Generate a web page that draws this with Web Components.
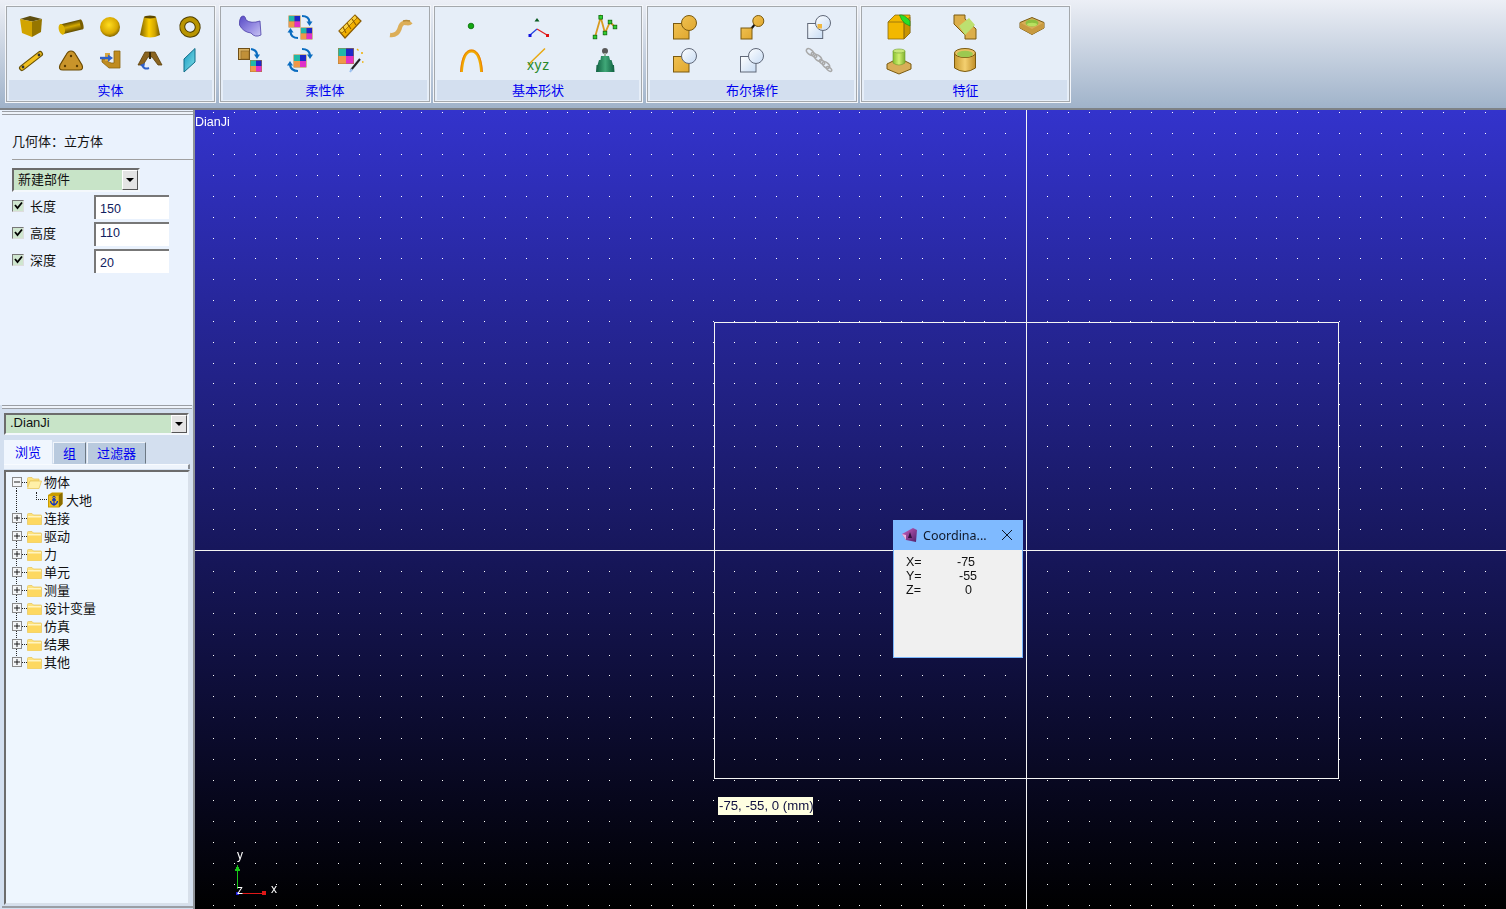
<!DOCTYPE html>
<html lang="zh"><head><meta charset="utf-8"><title>CAD</title>
<style>
html,body{margin:0;padding:0;height:909px;overflow:hidden;background:#000}
body{font-family:"Liberation Sans","Noto Sans CJK SC",sans-serif;font-size:13px}
</style></head><body>
<cad-app>
  <cad-ribbon slot="ribbon">
    <ribbon-group label="实体" cols="5" style="width:209px;margin-right:5px;--px:4px">
      <cad-icon name="box"></cad-icon><cad-icon name="cyl"></cad-icon><cad-icon name="sphere"></cad-icon><cad-icon name="cone"></cad-icon><cad-icon name="torus"></cad-icon>
      <cad-icon name="link"></cad-icon><cad-icon name="plate"></cad-icon><cad-icon name="ubar"></cad-icon><cad-icon name="arch"></cad-icon><cad-icon name="plane"></cad-icon>
    </ribbon-group>
    <ribbon-group label="柔性体" cols="4" style="width:210px;margin-right:4px;--px:4px">
      <cad-icon name="surface"></cad-icon><cad-icon name="swap"></cad-icon><cad-icon name="bar"></cad-icon><cad-icon name="squiggle"></cad-icon>
      <cad-icon name="tocolor"></cad-icon><cad-icon name="rotcolor"></cad-icon><cad-icon name="wand"></cad-icon>
    </ribbon-group>
    <ribbon-group label="基本形状" cols="3" style="width:208px;margin-right:5px;--px:2.5px">
      <cad-icon name="point"></cad-icon><cad-icon name="axes"></cad-icon><cad-icon name="poly"></cad-icon>
      <cad-icon name="arc"></cad-icon><cad-icon name="xyz"></cad-icon><cad-icon name="stack"></cad-icon>
    </ribbon-group>
    <ribbon-group label="布尔操作" cols="3" style="width:210px;margin-right:4px;--px:4px">
      <cad-icon name="b1"></cad-icon><cad-icon name="b2"></cad-icon><cad-icon name="b3"></cad-icon>
      <cad-icon name="b4"></cad-icon><cad-icon name="b5"></cad-icon><cad-icon name="chain"></cad-icon>
    </ribbon-group>
    <ribbon-group label="特征" cols="3" style="width:209px;--px:4px">
      <cad-icon name="f1"></cad-icon><cad-icon name="f2"></cad-icon><cad-icon name="f3"></cad-icon>
      <cad-icon name="f4"></cad-icon><cad-icon name="f5"></cad-icon>
    </ribbon-group>
  </cad-ribbon>
  <cad-sidebar slot="side">
    <geo-panel slot="top">
      <cad-combo slot="combo" style="margin:8px 53px 0 12px;height:24px">新建部件</cad-combo>
      <cad-field label="长度" value="150" shift="1"></cad-field>
      <cad-field label="高度" value="110" shift="-2"></cad-field>
      <cad-field label="深度" value="20" shift="1"></cad-field>
    </geo-panel>
    <browse-panel slot="bottom">
      <cad-combo slot="combo" style="margin:0 4px 0 4px;height:22px;font-family:'Liberation Sans',sans-serif">.DianJi</cad-combo>
      <tree-row folder="open" state="minus" label="物体" line="half-start"></tree-row>
      <tree-row kind="child" label="大地" line="full"></tree-row>
      <tree-row label="连接" state="plus" line="full"></tree-row>
      <tree-row label="驱动" state="plus" line="full"></tree-row>
      <tree-row label="力" state="plus" line="full"></tree-row>
      <tree-row label="单元" state="plus" line="full"></tree-row>
      <tree-row label="测量" state="plus" line="full"></tree-row>
      <tree-row label="设计变量" state="plus" line="full"></tree-row>
      <tree-row label="仿真" state="plus" line="full"></tree-row>
      <tree-row label="结果" state="plus" line="full"></tree-row>
      <tree-row label="其他" state="plus" line="half-end"></tree-row>
    </browse-panel>
  </cad-sidebar>
  <cad-viewport slot="view">
    <coord-dialog></coord-dialog>
  </cad-viewport>
</cad-app>
<script>
const DEFS=`<defs>
<linearGradient id="gh"><stop offset="0" stop-color="#7a5e00"/><stop offset=".45" stop-color="#ffd000"/><stop offset=".75" stop-color="#d0a400"/><stop offset="1" stop-color="#6e5400"/></linearGradient>
<linearGradient id="gv" x2="0" y2="1"><stop offset="0" stop-color="#5f4b00"/><stop offset=".45" stop-color="#d4a900"/><stop offset="1" stop-color="#5f4b00"/></linearGradient>
<radialGradient id="gs" cx=".45" cy=".4" r=".65"><stop offset="0" stop-color="#ffdd20"/><stop offset=".65" stop-color="#d8a800"/><stop offset="1" stop-color="#6e5600"/></radialGradient>
<linearGradient id="bg" x1="0" y1="0" x2="1" y2="1"><stop offset="0" stop-color="#f0c050"/><stop offset="1" stop-color="#e0a830"/></linearGradient>
<linearGradient id="bw" x1="0" y1="0" x2="1" y2="1"><stop offset="0" stop-color="#fdfeff"/><stop offset="1" stop-color="#c8dcf4"/></linearGradient>
<linearGradient id="pu" x1="0" y1="0" x2="1" y2="1"><stop offset="0" stop-color="#5548c4"/><stop offset=".6" stop-color="#9a90e4"/><stop offset="1" stop-color="#c8c4f2"/></linearGradient>
<linearGradient id="cy" x1="0" y1="0" x2="1" y2="1"><stop offset="0" stop-color="#1898c0"/><stop offset="1" stop-color="#80e0e8"/></linearGradient>
<linearGradient id="ge" x2="1"><stop offset="0" stop-color="#0f5f40"/><stop offset=".5" stop-color="#40a878"/><stop offset="1" stop-color="#0f5f40"/></linearGradient>
<linearGradient id="gt" x2="1"><stop offset="0" stop-color="#c89a30"/><stop offset=".5" stop-color="#f4d070"/><stop offset="1" stop-color="#c08e28"/></linearGradient>
<linearGradient id="lg" x2="1"><stop offset="0" stop-color="#88c030"/><stop offset=".5" stop-color="#d0f070"/><stop offset="1" stop-color="#80b030"/></linearGradient>
</defs>`;
const cc=(x,y,s)=>{const h=s/2;return `<rect x="${x-.5}" y="${y-.5}" width="${s+1}" height="${s+1}" fill="#b08030"/><rect x="${x}" y="${y}" width="${h}" height="${h}" fill="#20b8a8"/><rect x="${x+h}" y="${y}" width="${h}" height="${h}" fill="#1c28c8"/><rect x="${x}" y="${y+h}" width="${h}" height="${h}" fill="#f09848"/><rect x="${x+h}" y="${y+h}" width="${h}" height="${h}" fill="#e030c8"/>`};
const ar=(d,h)=>`<path d="${d}" fill="none" stroke="#0a6cc0" stroke-width="2.2"/><polygon points="${h}" fill="#0a6cc0"/>`;
const BS='stroke="#7a5a10" stroke-width="1"';
const BW='stroke="#606878" stroke-width="1"';
const ICONS={
box:`<polygon points="5,8 15,5 27,8 17,10.500" fill="#5e4e10"/><polygon points="5,8 17,10.500 17,26 7,22" fill="#d2a400"/><polygon points="17,10.500 27,8 26,21 17,26" fill="#967600"/>`,
cyl:`<g transform="rotate(-14 16 16)"><rect x="6" y="11" width="21" height="10" fill="url(#gv)"/><ellipse cx="27" cy="16" rx="1.500" ry="5" fill="#7a5e00"/><ellipse cx="6.500" cy="16" rx="3" ry="5.500" fill="#dcb200"/></g>`,
sphere:`<circle cx="16" cy="16" r="10" fill="url(#gs)"/>`,
cone:`<path d="M10 6 L22 6 Q24 14 26 24 Q16 29 6 24 Q8 14 10 6Z" fill="url(#gh)"/><ellipse cx="16" cy="6" rx="6" ry="1.500" fill="#5c4800"/>`,
torus:`<ellipse cx="16" cy="16" rx="7.800" ry="7.600" transform="rotate(30 16 16)" fill="none" stroke="#4f3f00" stroke-width="6"/><ellipse cx="16" cy="16" rx="7.800" ry="7.600" transform="rotate(30 16 16)" fill="none" stroke="#b89400" stroke-width="4"/>`,
link:`<path d="M7 24 L25 10" stroke="#6b5200" stroke-width="6" stroke-linecap="round"/><path d="M7 24 L25 10" stroke="#f0c020" stroke-width="3.600" stroke-linecap="round"/><circle cx="8" cy="23" r="1.400" fill="#333"/><circle cx="24" cy="11" r="1.400" fill="#333"/>`,
plate:`<path d="M16 7 Q19 7 21 11 L27 21 Q29 26 24 26 L8 26 Q3 26 5 21 L11 11 Q13 7 16 7Z" fill="#c9942a" stroke="#6b4a00" stroke-width="1.200"/><circle cx="16" cy="12" r="1.200" fill="#5a3c00"/><circle cx="10" cy="22" r="1.200" fill="#5a3c00"/><circle cx="22" cy="22" r="1.200" fill="#5a3c00"/>`,
ubar:`<path d="M20 7 H26 V24 H15 L8 18 V15 H13 V17 L17 19 H20Z" fill="#c08c20" stroke="#8a6410" stroke-width=".8"/><rect x="11" y="9" width="5" height="8" fill="#d8a840"/><path d="M6 14 H15" stroke="#2f60c8" stroke-width="2.400"/><polygon points="14,10.500 19,14 14,17.500" fill="#2f60c8"/>`,
arch:`<path d="M11 8 H21 L28 21 H24 L18 13 H14 L9 21 H4Z" fill="#8a6420" stroke="#5a3e08" stroke-width=".8"/><rect x="15" y="8" width="2" height="7" fill="#3a2a08"/><path d="M8 21 Q10 26 15 24" fill="none" stroke="#2f60c8" stroke-width="2"/><polygon points="6,21 11,19 10,24" fill="#2f60c8"/>`,
plane:`<polygon points="10,15 21,4.500 21,18 10,28" fill="url(#cy)" stroke="#0f6c88" stroke-width="1"/>`,
surface:`<path d="M7 6 Q11 3 12 9 Q17 13 26 10 L27 24 Q21 27 17 22 Q9 21 5.500 14 Q5 9 7 6Z" fill="url(#pu)" stroke="#4d40a8" stroke-width=".8"/>`,
swap:cc(5,5,11)+cc(17,17,11)+ar('M18 5 Q25 5 25.500 11','22.500,10.500 28.500,10.500 25.500,15')+ar('M14 27 Q7 27 6.500 21','3.500,21.500 9.500,21.500 6.500,17'),
bar:`<polygon points="5,20 21,4 27,10 11,27" fill="#f2b000" stroke="#8a5a00" stroke-width="1.200"/><polygon points="5,20 21,4 23,7 8,22" fill="#f8d040" stroke="#8a5a00" stroke-width=".7"/><path d="M13 12 L17 18 M18 8 L22 14 M9 16 L12 22" stroke="#8a5a00" stroke-width="1.100"/>`,
squiggle:`<path d="M6 24 Q13 25 15.500 18 Q17 11 22 12 Q25 13 27 11" fill="none" stroke="#dcae58" stroke-width="4.400"/><path d="M19 10 Q22 9 26 10" fill="none" stroke="#b88c38" stroke-width="1.400"/>`,
tocolor:`<rect x="4.500" y="4.500" width="11" height="11" fill="#d8b060" stroke="#6e4e18" stroke-width="1"/><rect x="7" y="7" width="8" height="8" fill="#c09038" stroke="#8a6828" stroke-width=".6"/>`+ar('M17 5 Q23 6 23 11','20,10.500 26,10.500 23,15')+cc(16.500,16.500,11),
rotcolor:cc(10,11,12)+ar('M18 5 Q25 5 26 11','23,10.500 29,10.500 26,15')+ar('M14 27 Q7 27 6 21','3,21.500 9,21.500 6,17'),
wand:cc(4.500,4.500,15)+`<path d="M26 15 L17 26" stroke="#222" stroke-width="2"/><path d="M18 25 L16 28" stroke="#9ac0f0" stroke-width="2"/><path d="M23 5 l1.500 1.500 M27 9 h2 M28 18 h1.500" stroke="#f0b000" stroke-width="1.300"/>`,
point:`<circle cx="16" cy="15" r="2.800" fill="#12a812" stroke="#0a6a0a" stroke-width=".8"/>`,
axes:`<path d="M15 18 L8 24" stroke="#2040e0" stroke-width="1.200"/><path d="M15 18 L25 24" stroke="#e02020" stroke-width="1.200"/><rect x="6.500" y="23" width="3" height="3" fill="#1010e0"/><rect x="24" y="23" width="3" height="3" fill="#e01010"/><polygon points="15,7 17.500,10.500 12.500,10.500" fill="#0a5a20"/>`,
poly:`<polyline points="6,26 11.700,6.300 16,22 21,11 26,16" fill="none" stroke="#d89a20" stroke-width="1.800"/>`+[[6,26],[11.7,6.3],[16,22],[21,11],[26,16]].map(p=>`<rect x="${p[0]-1.8}" y="${p[1]-1.8}" width="3.600" height="3.600" fill="#30d030" stroke="#0a6a0a" stroke-width=".8"/>`).join(''),
arc:`<path d="M6.500 28 C7.500 13 11.500 7 16.500 7 C21.500 7 25.500 13 26.500 28" fill="none" stroke="#f0a800" stroke-width="2.800"/><path d="M5.500 28 C6.500 12 11 6 16.500 6 C22 6 26.500 12 27.500 28" fill="none" stroke="#e86000" stroke-width=".6"/>`,
xyz:`<path d="M23 4.500 L6 21" stroke="#e8a810" stroke-width="1.500"/><text x="5" y="26" font-family="Liberation Sans,sans-serif" font-size="14" fill="#2a8a2a" letter-spacing=".6">xyz</text>`,
stack:`<circle cx="16" cy="7" r="3" fill="#585858"/><rect x="15" y="9" width="2" height="3" fill="#a0b0a0"/><path d="M12 12 H20 L21 16 H22.500 L24 21 H25 L25.500 28 H7 L7.500 21 H8.500 L10 16 H11.500Z" fill="url(#ge)"/>`,
b1:`<rect x="4.500" y="12.500" width="15.500" height="15.500" fill="url(#bg)" ${BS}/><circle cx="20" cy="12" r="7.500" fill="url(#bg)" ${BS}/>`,
b2:`<path d="M15 18 L20 12" stroke="#111" stroke-width="2"/><rect x="5" y="17" width="11" height="11" fill="url(#bg)" ${BS}/><circle cx="22.300" cy="10" r="5.500" fill="url(#bg)" ${BS}/>`,
b3:`<rect x="4.700" y="12.500" width="15" height="15" fill="url(#bw)" ${BW}/><circle cx="20" cy="12" r="7.500" fill="url(#bw)" ${BW}/><rect x="14.500" y="13" width="4.500" height="4.500" fill="#f0b840"/>`,
b4:`<rect x="4.500" y="12.500" width="15.500" height="15.500" fill="url(#bg)" ${BS}/><circle cx="20" cy="12" r="7.500" fill="url(#bw)" ${BW}/>`,
b5:`<rect x="4.500" y="12.500" width="15.500" height="15.500" fill="url(#bw)" ${BW}/><circle cx="20" cy="12" r="7.500" fill="url(#bw)" ${BW}/>`,
chain:[[7,8],[11,11],[15,14],[19,18],[23,21],[26,25]].map((p,i)=>`<ellipse cx="${p[0]}" cy="${p[1]}" rx="${i%2?3.2:4.2}" ry="${i%2?1.6:2.4}" transform="rotate(40 ${p[0]} ${p[1]})" fill="none" stroke="#a8a8a8" stroke-width="1.500"/>`).join(''),
f1:`<polygon points="5,11 12,4 27,4 27,22 21,28 5,28" fill="#f2b800" stroke="#8a6a10" stroke-width=".8"/><polygon points="21,11 27,6 27,22 21,28" fill="#c89400" stroke="#8a6a10" stroke-width=".6"/><path d="M5 11 H21 V28" fill="none" stroke="#8a6a10" stroke-width=".8"/><path d="M16.500 4 Q21 3 27 10 L27 15 L22 12.500 Q18 9 16.500 4Z" fill="#28e028" stroke="#0a8a20" stroke-width=".6"/>`,
f2:`<polygon points="5,4 16,4 16,8 27,18 27,28 16,28 16,24 5,13" fill="#dcae4a" stroke="#7a5a10" stroke-width="1"/><polygon points="10,15 20,7 26,14 16,24" fill="#bde070"/>`,
f3:`<polygon points="4,11.500 16,6.500 28,11.500 28,17 16,23.500 4,17" fill="#d8ae58" stroke="#7a5a10" stroke-width="1"/><polygon points="4,11.500 16,18 28,11.500 28,17 16,23.500 4,17" fill="#c89a40"/><ellipse cx="16" cy="12" rx="6.500" ry="3.500" fill="#8cc040"/><ellipse cx="16" cy="13.500" rx="5" ry="1.800" fill="#b8e060"/>`,
f4:`<polygon points="4,20 16,14 28,20 28,25 16,30 4,25" fill="#d8ae58" stroke="#7a5a10" stroke-width="1"/><path d="M10 7 H22 V19 Q16 23 10 19Z" fill="url(#lg)" stroke="#70a030" stroke-width=".6"/><ellipse cx="16" cy="7" rx="6" ry="2" fill="#c8e878" stroke="#70a030" stroke-width=".6"/>`,
f5:`<path d="M5.500 9 V24 Q16 31 26.500 24 V9Z" fill="url(#gt)" stroke="#7a5a10" stroke-width="1"/><ellipse cx="16" cy="9" rx="10.500" ry="4.500" fill="#e8c060" stroke="#7a5a10" stroke-width="1"/><ellipse cx="16" cy="10" rx="8" ry="3.300" fill="#9cc850"/>`
};
const def=(n,c)=>customElements.define(n,c);
const shadow=(el,html)=>{el.attachShadow({mode:'open'}).innerHTML=html;};

def('cad-icon',class extends HTMLElement{connectedCallback(){
 shadow(this,`<style>:host{display:flex;align-items:center;justify-content:center;height:33px}svg{display:block}</style><svg width="32" height="32" viewBox="0 0 32 32" xmlns="http://www.w3.org/2000/svg">${DEFS}${ICONS[this.getAttribute('name')]||''}</svg>`);
}});
def('cad-app',class extends HTMLElement{constructor(){super();shadow(this,`<style>
:host{display:grid;width:1506px;height:909px;grid-template-columns:195px 1fr;grid-template-rows:110px 1fr}
.r{grid-column:1/3;display:block}
</style><div class="r"><slot name="ribbon"></slot></div><slot name="side"></slot><slot name="view"></slot>`);}});
def('cad-ribbon',class extends HTMLElement{constructor(){super();shadow(this,`<style>
:host{display:flex;box-sizing:border-box;height:110px;padding:6px 0 0 6px;align-items:flex-start;
background:linear-gradient(#eceff6 0,#e6eaf2 8%,#a0b3ca 100%);border-bottom:2px solid #7e8286}
</style><slot></slot>`);}});
def('ribbon-group',class extends HTMLElement{connectedCallback(){
 const l=this.getAttribute('label'),c=this.getAttribute('cols');
 shadow(this,`<style>
:host{display:block;box-sizing:border-box;height:96px;flex:none;background:#e6eef8;border:1px solid #a4a8ac;box-shadow:0 0 0 1px #f4f6fa;padding-top:3px}
.g{display:grid;height:70px;padding:0 var(--px,4px);grid-template-columns:repeat(${c},1fr);grid-auto-rows:33px}
.l{height:20px;margin:0 2px;background:#d3dfef;color:#0000f0;font:13px/20px "Noto Sans CJK SC",sans-serif;text-align:center}
</style><div class="g"><slot></slot></div><div class="l">${l}</div>`);
}});
def('cad-sidebar',class extends HTMLElement{constructor(){super();shadow(this,`<style>
:host{display:flex;flex-direction:column;box-sizing:border-box;height:799px;background:#eaf2fd;border-right:2px solid #8e9298}
.t{height:295px;flex:none;display:block}.b{flex:1;min-height:0;display:flex}
::slotted(*){width:100%}
</style><div class="t"><slot name="top"></slot></div><div class="b"><slot name="bottom"></slot></div>`);}});
const GROOVE=`.gr{height:2px;border-top:1px solid #9a9ea4;border-bottom:1px solid #9a9ea4;background:#eef3fa;box-sizing:content-box}`;
def('geo-panel',class extends HTMLElement{constructor(){super();shadow(this,`<style>
:host{display:block;height:295px;font:13px "Noto Sans CJK SC",sans-serif;color:#111}
${GROOVE}
.gr{margin:1px 0 0 2px}
.h{height:45px;line-height:51px;padding-left:12px;box-sizing:border-box;position:relative}
.h::after{content:"";display:block;height:1px;background:#a0a0a0;margin-top:-7px}
.list{display:flex;flex-direction:column;gap:3px;margin:3px 0 0 0}
::slotted(cad-combo){display:flex}
</style><div class="gr"></div><div class="h"><span>几何体：立方体</span></div><slot name="combo"></slot><div class="list"><slot></slot></div>`);}});
def('cad-combo',class extends HTMLElement{constructor(){super();shadow(this,`<style>
:host{display:flex;box-sizing:border-box;background:#c8e4c8;border:2px solid;border-color:#6c6c6c #f4f8fc #f4f8fc #6c6c6c;font:13px "Noto Sans CJK SC",sans-serif;color:#111}
.t{flex:1;padding:0 0 3px 4px;display:flex;align-items:center;box-sizing:border-box}
.b{width:16px;box-sizing:border-box;background:#e4e4e4;border:1px solid;border-color:#fff #555 #555 #fff;display:flex;align-items:center;justify-content:center}
.a{width:0;height:0;border:4px solid transparent;border-top:4px solid #000;border-bottom:0}
</style><div class="t"><slot></slot></div><div class="b"><div class="a"></div></div>`);}});
def('cad-field',class extends HTMLElement{connectedCallback(){
 const s=+this.getAttribute('shift')||0;
 shadow(this,`<style>
:host{display:flex;align-items:center;height:24px;padding-left:12px;font:13px "Noto Sans CJK SC",sans-serif;color:#111}
.c{width:10px;height:10px;background:#cfe6cf;border:1px solid;border-color:#777 #ddd #ddd #777;display:flex;align-items:center;justify-content:center;margin-top:-3px}
.l{margin-left:6px;width:64px;margin-top:-4px}
.i{width:75px;height:24px;box-sizing:border-box;background:#fff;border-top:2px solid #777;border-left:2px solid #777;padding:${3+s}px 0 0 4px;font:12.500px/16px "Liberation Sans",sans-serif;color:#102060}
</style><div class="c"><svg width="9" height="9" viewBox="0 0 9 9"><path d="M1 4 L3.500 7 L8 1.500" fill="none" stroke="#000" stroke-width="1.800"/></svg></div><div class="l">${this.getAttribute('label')}</div><div class="i">${this.getAttribute('value')}</div>`);
}});
def('browse-panel',class extends HTMLElement{constructor(){super();shadow(this,`<style>
:host{display:flex;flex-direction:column;height:504px;background:#d3dfef;font:13px "Noto Sans CJK SC",sans-serif}
${GROOVE}
.gr{margin:0 1px 0 2px}
.sp{height:4px}
.tabs{display:flex;height:24px;margin:5px 0 0 4px;align-items:flex-end}
.tab{box-sizing:border-box;height:22px;line-height:20px;color:#0000f0;text-align:center;background:#b9cade;border:1px solid;border-color:#f0f4fa #6c7884 transparent #f0f4fa;margin-right:1px}
.tab.on{height:24px;line-height:24px;background:#f0f6fe;border:0;width:48px}
.st{height:5px;margin:0 3px 0 4px;background:#eef4fc;border-top:1px solid #f8fbff;border-right:2px solid #8a8e94;box-sizing:border-box;margin-bottom:1px}
.tree{flex:1;margin:0 3px 1px 4px;background:#eef6fe;border:2px solid;border-color:#6c6c6c #d8e0ea #d8e0ea #6c6c6c;padding-top:1px;min-height:0;overflow:hidden}
.end{height:2px;flex:none;background:#9a9ea4;margin:0 0 1px 2px}
</style><div class="gr"></div><div class="sp"></div><slot name="combo"></slot>
<div class="tabs"><div class="tab on">浏览</div><div class="tab" style="width:33px">组</div><div class="tab" style="width:59px">过滤器</div></div>
<div class="st"></div><div class="tree"><slot></slot></div><div class="end"></div>`);}});
const FOLD=`<svg width="15" height="13" viewBox="0 0 15 13"><path d="M.5 2.500 Q.5 1.500 1.500 1.500 H5 L6.500 3 H14 Q14.500 3 14.500 3.500 V12.500 H.5Z" fill="#fde27c" stroke="#e8c860" stroke-width=".8"/><rect x="1" y="4.500" width="13" height="8" fill="#fdd860"/><rect x="1" y="4" width="13" height="1.500" fill="#fff4c0"/></svg>`;
const FOPEN=`<svg width="15" height="13" viewBox="0 0 15 13"><path d="M.5 2.500 Q.5 1.500 1.500 1.500 H5 L6.500 3 H12 V5 H3 L.5 11Z" fill="#fde27c" stroke="#e8c860" stroke-width=".8"/><path d="M3 5 H14.500 L12 12.500 H.5Z" fill="#fff0a8" stroke="#e8c860" stroke-width=".8"/></svg>`;
const ANCH=`<svg width="16" height="16" viewBox="0 0 16 16"><polygon points="1,3 5,.5 15.500,.5 15.500,12 12,15.500 1,15.500" fill="#c89c00"/><polygon points="12,3 15.500,.5 15.500,12 12,15.500" fill="#8a6c00"/><rect x="2" y="4" width="9.500" height="10.500" fill="#f0c020"/><circle cx="7" cy="5.500" r="1.200" fill="none" stroke="#1030c0" stroke-width="1"/><path d="M7 6.500 V13 M3.500 9 Q4 12.500 7 13 Q10 12.500 10.500 9 M5 8 H9" fill="none" stroke="#1030c0" stroke-width="1.300"/></svg>`;
def('tree-row',class extends HTMLElement{connectedCallback(){
 const st=this.getAttribute('state'),lab=this.getAttribute('label'),child=this.getAttribute('kind')==='child',ln=this.getAttribute('line');
 const dots='repeating-linear-gradient(#222 0 1px,transparent 1px 2px)';
 const bg=ln==='half-start'?'background-position:10px 9px;background-size:1px 9px':ln==='half-end'?'background-position:10px 0;background-size:1px 9px':'background-position:10px 0;background-size:1px 18px';
 const ex=st?`<div class="x"><svg width="7" height="7" viewBox="0 0 7 7"><path d="M0 3.500 H7 ${st==='plus'?'M3.500 0 V7':''}" stroke="#000" stroke-width="1"/></svg></div><div class="d"></div>`:'';
 const body=child?`<div class="ci"></div>${ANCH}<span style="margin-left:3px">${lab}</span>`:`${ex}${this.getAttribute('folder')==='open'?FOPEN:FOLD}<span style="margin-left:2px">${lab}</span>`;
 shadow(this,`<style>
:host{display:flex;align-items:center;height:18px;padding-left:6px;color:#111;font:13px/18px "Noto Sans CJK SC",sans-serif;white-space:nowrap;background-image:${dots};background-repeat:no-repeat;${bg}}
.x{width:10px;height:10px;box-sizing:border-box;border:1px solid #8a8a8a;background:#f4f6f8;display:flex;align-items:center;justify-content:center}
.x svg{width:6px;height:6px}
.d{width:5px;height:1px;background:repeating-linear-gradient(90deg,#222 0 1px,transparent 1px 2px)}
svg{flex:none}
.ci{width:11px;height:8px;margin:-8px 0 0 24px;border-left:1px dotted #222;border-bottom:1px dotted #222;box-sizing:border-box;flex:none}
</style>${body}`);
}});
def('cad-viewport',class extends HTMLElement{connectedCallback(){
 shadow(this,`<style>
:host{display:block;position:relative;width:1311px;height:799px;overflow:hidden;background:linear-gradient(#3333cc,#000);color:#fff}
canvas,svg{position:absolute;left:0;top:0}
.n{position:absolute;left:0;top:5px;font:12.500px/14px "Liberation Sans",sans-serif;color:#fff}
.tip{position:absolute;left:523px;top:687px;width:95px;height:18px;background:#ffffe1;color:#101040;font:13.200px/18px "Liberation Sans",sans-serif;white-space:nowrap;padding-left:1px;box-sizing:border-box;overflow:hidden}
</style><canvas width="1311" height="799"></canvas>
<svg width="1311" height="799" shape-rendering="crispEdges">
<path d="M831.500 0 V799 M0 440.500 H1311" stroke="#f4f4f4" fill="none"/>
<rect x="519.500" y="212.500" width="624" height="456" fill="none" stroke="#f4f4f4"/>
<path d="M42.500 779 V759" stroke="#18c818"/><polygon points="39.500,761 42.500,755 45.500,761" fill="#18c818"/>
<path d="M43 783.500 H68" stroke="#e01818"/><rect x="67" y="781" width="4" height="4" fill="#e01818"/>
<rect x="41" y="782" width="3" height="3" fill="#2020e0"/>
<text x="42" y="749" fill="#fff" font-family="Liberation Sans,sans-serif" font-size="12">y</text>
<text x="42" y="784" fill="#fff" font-family="Liberation Sans,sans-serif" font-size="12">z</text>
<text x="76" y="783" fill="#fff" font-family="Liberation Sans,sans-serif" font-size="12">x</text>
</svg>
<div class="n">DianJi</div><div class="tip">-75, -55, 0 (mm)</div><slot></slot>`);
 const c=this.shadowRoot.querySelector('canvas').getContext('2d');c.fillStyle='#fff';
 for(let y=2.4;y<799;y+=20.85)for(let x=18;x<1311;x+=20.85)c.fillRect(Math.round(x),Math.round(y),1,1);
}});
def('coord-dialog',class extends HTMLElement{constructor(){super();shadow(this,`<style>
:host{position:absolute;left:698px;top:410px;width:130px;height:138px;box-sizing:border-box;background:#f0f0f0;border:1px solid #7ab6fb;border-top:0;color:#111}
.t{height:30px;background:#7fbaff;display:flex;align-items:center;margin:0 -1px;padding:0 10px 0 8px;font:12.500px "Noto Sans",sans-serif;color:#101828}
.t svg.l{margin-right:4px}.t span{flex:1}
.g{display:grid;grid-template-columns:51px 1fr;padding:5px 0 0 12px;font:12.500px/14px "Liberation Sans",sans-serif}
</style><div class="t"><svg class="l" width="18" height="16" viewBox="0 0 18 16"><defs><linearGradient id="m" x1="0" y1="0" x2="1" y2="1"><stop offset="0" stop-color="#d060c0"/><stop offset="1" stop-color="#50206a"/></linearGradient></defs><polygon points="1,7 12,1 16,3 15,15 5,13" fill="url(#m)"/><polygon points="1,7 5,13 5,8" fill="#f0b8e0"/><polygon points="9,5 11,11 7,11" fill="#301040"/></svg><span>Coordina...</span><svg width="12" height="12" viewBox="0 0 12 12"><path d="M1 1 L11 11 M11 1 L1 11" stroke="#101828" stroke-width="1"/></svg></div>
<div class="g"><div>X=</div><div>-75</div><div>Y=</div><div style="padding-left:2px">-55</div><div>Z=</div><div style="padding-left:8px">0</div></div>`);}});
</script>
</body></html>
